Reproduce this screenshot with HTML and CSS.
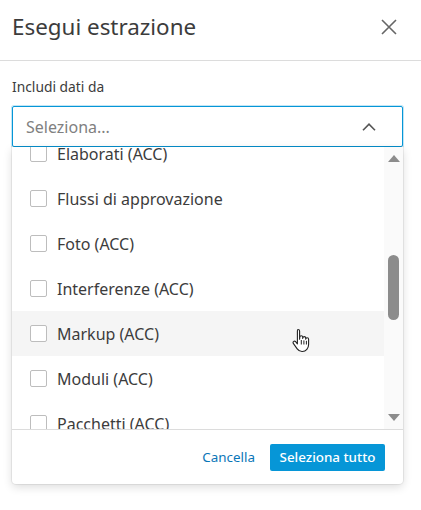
FILE: index.html
```html
<!DOCTYPE html>
<html lang="it">
<head>
<meta charset="utf-8">
<title>Esegui estrazione</title>
<link rel="stylesheet" href="styles.css">
</head>
<body>
<div class="dialog">
  <header class="head">
    <h1 class="title">Esegui estrazione</h1>
    <button class="close" aria-label="Chiudi">
      <svg width="16" height="16" viewBox="0 0 16 16"><path d="M1 1L15 15M15 1L1 15" stroke="#666" stroke-width="1.6" fill="none"/></svg>
    </button>
  </header>
  <div class="body">
    <div class="label">Includi dati da</div>
    <div class="select-wrap">
      <div class="select">
        <span class="placeholder">Seleziona...</span>
        <svg class="chev" width="14" height="8" viewBox="0 0 14 8"><path d="M1 7.2L7 1.2L13 7.2" stroke="#555" stroke-width="1.6" fill="none"/></svg>
      </div>
      <div class="menu">
        <div class="scroll">
          <ul class="list">
            <li class="row"><span class="box"></span>Elaborati (ACC)</li>
            <li class="row"><span class="box"></span>Flussi di approvazione</li>
            <li class="row"><span class="box"></span>Foto (ACC)</li>
            <li class="row"><span class="box"></span>Interferenze (ACC)</li>
            <li class="row hover"><span class="box"></span>Markup (ACC)</li>
            <li class="row"><span class="box"></span>Moduli (ACC)</li>
            <li class="row"><span class="box"></span>Pacchetti (ACC)</li>
          </ul>
          <div class="bar">
            <span class="tri up"></span>
            <span class="track"><span class="thumb"></span></span>
            <span class="tri down"></span>
          </div>
        </div>
        <div class="foot">
          <button class="link">Cancella</button>
          <button class="primary">Seleziona tutto</button>
        </div>
      </div>
    </div>
  </div>
  <svg class="cursor" width="22" height="26" viewBox="0 0 22 26">
    <path d="M7 1.5c1 0 1.6.7 1.6 1.6v8.2l.2-2.2c.1-.9.7-1.4 1.5-1.4s1.4.6 1.4 1.5v1.3l.1-.6c.1-.8.7-1.3 1.5-1.3s1.4.6 1.4 1.4v1.2l.1-.3c.2-.7.7-1.1 1.4-1.1.8 0 1.4.6 1.4 1.4v5.4c0 3.8-2.6 6.9-6.2 6.9H11c-2.2 0-3.6-.9-4.8-2.6l-3.900-5.500c-.5-.7-.3-1.600.4-2 .6-.4 1.400-.3 1.900.3l1.800 2.100V3.100C6.400 2.200 6.600 1.500 7 1.500z" fill="#fff" stroke="#222" stroke-width="1.1" stroke-linejoin="round"/>
    <path d="M10.3 12v4.5M12.9 12.4v4.1M15.4 12.8v3.7" stroke="#222" stroke-width="1" fill="none"/>
  </svg>
</div>
</body>
</html>
```

FILE: styles.css
```css
* { box-sizing: border-box; }
html, body { margin: 0; padding: 0; background: #fff; }
body {
  font-family: "Noto Sans", "Open Sans", sans-serif;
  color: #3c3c3c;
}
.dialog {
  position: relative;
  width: 421px;
  height: 510px;
  background: #fff;
}
.head {
  height: 61px;
  border-bottom: 1px solid #dcdcdc;
  display: flex;
  align-items: center;
  justify-content: space-between;
  padding: 0 12px 7px 12px;
}
.title {
  margin: 0;
  font-size: 22.4px;
  line-height: 28px;
  font-weight: 400;
  color: #3c3c3c;
}
.close {
  border: 0;
  background: none;
  padding: 0;
  width: 16px;
  height: 16px;
  margin-right: 12px;
  display: flex;
}
.body {
  padding: 16px 18px 0 12px;
}
.label {
  font-size: 13.8px;
  line-height: 20px;
  color: #3c3c3c;
  margin-bottom: 9px;
}
.select-wrap { position: relative; }
.select {
  height: 41px;
  border: 1px solid #0696d7;
  border-radius: 2px;
  box-shadow: 0 0 0 1px rgba(6,150,215,0.25);
  display: flex;
  align-items: center;
  justify-content: space-between;
  padding: 0 26px 0 13px;
}
.placeholder {
  font-size: 16px;
  color: #808080;
}
.chev { display: block; }
.menu {
  position: absolute;
  left: 0;
  right: 0;
  top: 41px;
  height: 337px;
  background: #fff;
  border-radius: 0 0 4px 4px;
  box-shadow: 0 0 0 1px rgba(0,0,0,0.06), 0 3px 10px rgba(0,0,0,0.14);
  display: flex;
  flex-direction: column;
  z-index: 2;
}
.scroll {
  height: 283px;
  display: flex;
  overflow: hidden;
  border-bottom: 1px solid #dcdcdc;
}
.list {
  list-style: none;
  margin: -16px 0 0 0;
  padding: 0;
  flex: 1;
}
.row {
  height: 45px;
  display: flex;
  align-items: center;
  padding-left: 18px;
  font-size: 16px;
  color: #3c3c3c;
}
.row.hover { background: #f5f5f5; }
.box {
  width: 17px;
  height: 17px;
  border: 1px solid #bdbdbd;
  border-radius: 2px;
  background: #fff;
  margin-right: 10px;
  flex: none;
}
.bar {
  width: 19px;
  background: #fafafa;
  display: flex;
  flex-direction: column;
  align-items: center;
  padding: 8px 0 8px 0;
}
.tri {
  width: 0;
  height: 0;
  border-left: 6.5px solid transparent;
  border-right: 6.5px solid transparent;
  flex: none;
}
.tri.up { border-bottom: 7px solid #8c8c8c; }
.tri.down { border-top: 7px solid #8c8c8c; }
.track {
  flex: 1;
  display: flex;
  flex-direction: column;
  padding-top: 93px;
  padding-bottom: 94px;
}
.thumb {
  flex: 1;
  width: 11px;
  border-radius: 6px;
  background: #8c8c8c;
}
.foot {
  flex: 1;
  display: flex;
  align-items: center;
  justify-content: flex-end;
  padding: 0 18px 0 0;
  gap: 15px;
}
.link {
  border: 0;
  background: none;
  padding: 0;
  font-family: inherit;
  font-size: 13.4px;
  color: #0a76b8;
}
.primary {
  border: 0;
  background: #0696d7;
  color: #fff;
  font-family: inherit;
  font-size: 13.4px;
  font-weight: 500;
  height: 27px;
  width: 115px;
  padding: 0;
  border-radius: 2px;
}
.cursor {
  position: absolute;
  left: 291px;
  top: 328px;
  z-index: 3;
}
```
